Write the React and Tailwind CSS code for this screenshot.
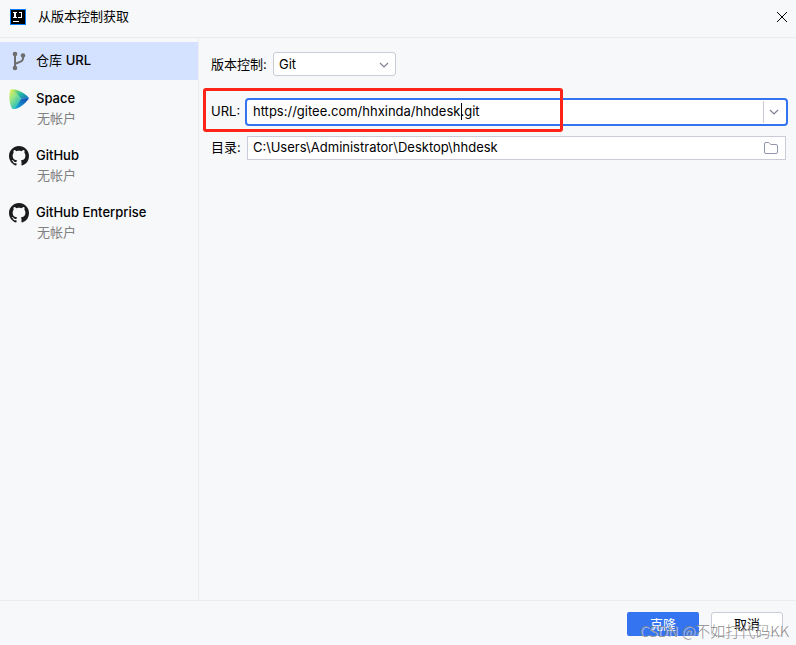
import { useState } from "react";

function IdeaLogo() {
  return (
    <svg width="16" height="16" viewBox="0 0 16 16" shapeRendering="crispEdges" aria-hidden="true">
      <rect width="16" height="16" fill="#087cfa" />
      <rect x="1" y="1" width="14" height="14" fill="#000" />
      <path d="M3 3h4v1H6v4h1v1H3V8h1V4H3zM9 3h3v6H8V8h3V4H9zM3 12h6v1H3z" fill="#fff" />
    </svg>
  );
}

function BranchIcon() {
  return (
    <svg width="20" height="20" viewBox="0 0 20 20" fill="none" stroke="#6e6e6e" strokeWidth="2" aria-hidden="true">
      <path d="M7 3v14M7 13.500c1-2.500 8-1.500 8-6V5" />
      <circle cx="7" cy="3" r="2.300" fill="#6e6e6e" stroke="none" />
      <circle cx="7" cy="17" r="2.300" fill="#6e6e6e" stroke="none" />
      <circle cx="15" cy="4.500" r="2.300" fill="#6e6e6e" stroke="none" />
    </svg>
  );
}

function SpaceIcon() {
  return (
    <svg width="20" height="20" viewBox="0 0 20 20" aria-hidden="true">
      <defs>
        <linearGradient id="space-face" x1="0" y1="0" x2="0.7" y2="1">
          <stop offset="0" stopColor="#f3f24b" />
          <stop offset="0.45" stopColor="#8fe38a" />
          <stop offset="1" stopColor="#12b5c9" />
        </linearGradient>
        <linearGradient id="space-top" x1="0" y1="0" x2="1" y2="1">
          <stop offset="0" stopColor="#c9ee4c" />
          <stop offset="0.5" stopColor="#22b9a0" />
          <stop offset="1" stopColor="#1766c8" />
        </linearGradient>
        <linearGradient id="space-bottom" x1="0" y1="1" x2="1" y2="0">
          <stop offset="0" stopColor="#13b6d6" />
          <stop offset="1" stopColor="#1546b0" />
        </linearGradient>
      </defs>
      <path d="M2.500 0.200C8 0 15 3.500 19.300 8.200c.6.700.6 1.500 0 2.100L12 9.500z" fill="url(#space-top)" />
      <path d="M12 9.500l7.500.4C16 14.800 10.500 19.300 5 20z" fill="url(#space-bottom)" />
      <path d="M2.500 0.200C6 2.500 10 6 12 9.500 10.500 13.500 8 17.500 5 20 3.600 20 3 19.600 2.500 18.500 0 13 0 6 1.300 1.200 1.500.5 1.900.2 2.500.2z" fill="url(#space-face)" />
    </svg>
  );
}

function GitHubIcon() {
  return (
    <svg width="20" height="20" viewBox="0 0 16 16" fill="#1b1b1b" aria-hidden="true">
      <path d="M8 0C3.580 0 0 3.580 0 8c0 3.540 2.290 6.530 5.470 7.590.4.070.55-.17.55-.38 0-.19-.01-.82-.01-1.490-2.010.37-2.530-.49-2.690-.94-.09-.23-.48-.94-.82-1.130-.28-.15-.68-.52-.01-.53.63-.01 1.080.58 1.230.82.72 1.210 1.870.87 2.330.66.070-.52.28-.87.51-1.070-1.780-.2-3.640-.89-3.640-3.950 0-.87.31-1.590.82-2.150-.08-.2-.36-1.020.08-2.120 0 0 .67-.21 2.200.82.64-.18 1.320-.27 2-.27s1.360.09 2 .27c1.530-1.040 2.200-.82 2.200-.82.44 1.100.16 1.920.08 2.120.51.56.82 1.270.82 2.150 0 3.070-1.870 3.750-3.650 3.950.29.25.54.73.54 1.480 0 1.070-.01 1.930-.01 2.200 0 .21.15.46.55.38A8.010 8.010 0 0 0 16 8c0-4.420-3.580-8-8-8z" />
    </svg>
  );
}

function Chevron() {
  return (
    <svg width="10" height="6" viewBox="0 0 10 6" fill="none" stroke="#7e8193" strokeWidth="1.2" aria-hidden="true">
      <path d="M1 1l4 4 4-4" />
    </svg>
  );
}

function FolderIcon() {
  return (
    <svg width="14" height="12" viewBox="0 0 14 12" fill="none" stroke="#9296ac" aria-hidden="true">
      <path d="M.5 10V2Q.5.5 2 .5h2.700l2 2H12Q13.500 2.500 13.500 4v6q0 1.500-1.500 1.500H2Q.5 11.500.5 10z" />
    </svg>
  );
}

const accounts = [
  { name: "Space", Icon: SpaceIcon },
  { name: "GitHub", Icon: GitHubIcon },
  { name: "GitHub Enterprise", Icon: GitHubIcon },
];

export default function App() {
  const [url, setUrl] = useState("https://gitee.com/hhxinda/hhdesk.git");
  const [directory, setDirectory] = useState("C:\\Users\\Administrator\\Desktop\\hhdesk");

  return (
    <div className="relative flex h-screen flex-col overflow-hidden bg-[#f7f8fa] font-[Inter,'Noto_Sans_CJK_SC',sans-serif] text-[13px] leading-5 text-black">
      <header className="flex items-center border-b border-[#ebecf0] pt-1.5 pr-[7px] pb-2.5 pl-2.5">
        <IdeaLogo />
        <h1 className="ml-3 leading-[21px]">从版本控制获取</h1>
        <button type="button" aria-label="关闭" className="ml-auto p-px">
          <svg width="12" height="12" viewBox="0 0 12 12" stroke="#000" aria-hidden="true">
            <path d="M1 1l10 10M11 1L1 11" />
          </svg>
        </button>
      </header>

      <div className="flex min-h-0 flex-1">
        <nav className="w-[199px] shrink-0 border-r border-[#ebecf0] pt-1">
          <button type="button" className="flex h-[38px] w-full gap-2 bg-[#d4e2ff] pt-2 pl-2 text-left">
            <span className="pt-px">
              <BranchIcon />
            </span>
            <span>
              仓库 <span className="font-medium">URL</span>
            </span>
          </button>
          {accounts.map(({ name, Icon }) => (
            <button key={name} type="button" className="flex h-[57px] w-full gap-[7px] pt-2 pl-[9px] text-left">
              <span className="pt-px">
                <Icon />
              </span>
              <span>
                <span className="block font-medium">{name}</span>
                <span className="block pl-px text-[#818181]">无帐户</span>
              </span>
            </button>
          ))}
        </nav>

        <main className="min-w-0 flex-1 pt-3.5 pr-2.5 pl-3">
          <div className="flex h-6 items-center">
            <label htmlFor="vcs" className="w-[62px]">版本控制:</label>
            <div className="relative">
              <select id="vcs" className="block h-6 w-[123px] appearance-none rounded-[3px] border border-[#c9ccd6] bg-white pl-[5px]">
                <option>Git</option>
              </select>
              <span className="pointer-events-none absolute top-[10px] right-[7px]">
                <Chevron />
              </span>
            </div>
          </div>

          <div className="relative mt-6 flex h-6 items-center">
            <label htmlFor="url" className="w-9 shrink-0 pb-0.5">URL:</label>
            <div className="relative flex h-6 min-w-0 flex-1 rounded-[2px] bg-white ring-2 ring-[#3574f0]">
              <input id="url" value={url} onChange={(e) => setUrl(e.target.value)} className="min-w-0 flex-1 bg-transparent pb-0.5 pl-1.5 outline-none" />
              <span className="absolute top-[3px] left-[214px] h-[17px] w-px bg-black" />
              <button type="button" aria-label="历史记录" className="my-px flex w-[23px] items-center border-l border-[#c9ccd6] pl-[5px]">
                <Chevron />
              </button>
            </div>
            <div className="pointer-events-none absolute -top-3 -left-2 h-11 w-[360px] rounded-[3px] border-3 border-[#ff2418]" />
          </div>

          <div className="mt-3 flex h-6 items-center">
            <label htmlFor="directory" className="w-9 shrink-0 pb-0.5">目录:</label>
            <div className="flex h-6 min-w-0 flex-1 items-center border border-[#c9ccd6] bg-white">
              <input id="directory" value={directory} onChange={(e) => setDirectory(e.target.value)} className="min-w-0 flex-1 bg-transparent pb-0.5 pl-[5px] outline-none" />
              <button type="button" aria-label="浏览" className="px-[7px]">
                <FolderIcon />
              </button>
            </div>
          </div>
        </main>
      </div>

      <footer className="flex justify-end gap-3 border-t border-[#ebecf0] pt-[11px] pr-[13px] pb-[9px]">
        <button type="button" className="h-6 w-[72px] rounded-[2px] bg-[#3574f0] text-white">克隆</button>
        <button type="button" className="h-6 w-[72px] rounded-[3px] border border-[#c9ccd6] bg-white">取消</button>
      </footer>

      <p className="pointer-events-none absolute right-[7px] bottom-1 font-['Noto_Sans_CJK_SC',sans-serif] text-[15px] leading-5 font-light whitespace-nowrap text-[#8c8c8c] text-shadow-[1px_1px_0_#ffffff99]">
        CSDN @不如打代码KK
      </p>
    </div>
  );
}
